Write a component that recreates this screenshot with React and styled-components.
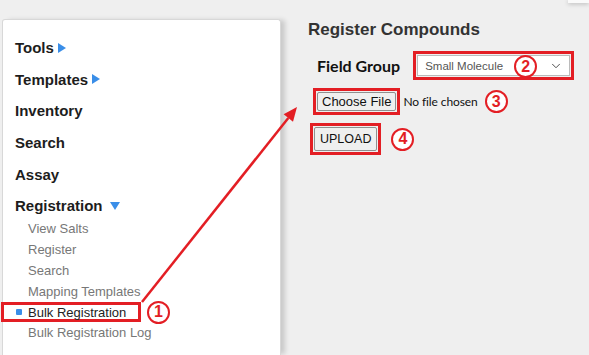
import React from 'react'
import styled, { createGlobalStyle } from 'styled-components'
import { ChevronDown } from 'lucide-react'

const red = '#e31e24'
const blue = '#3a8ee8'
const pageBg = '#efefef'

const GlobalStyle = createGlobalStyle`
  html, body {
    margin: 0;
    padding: 0;
    background: ${pageBg};
    overflow: hidden;
  }
  #root {
    height: 355px;
  }
`

const Page = styled.div`
  position: relative;
  display: flex;
  height: 355px;
  font-family: 'Liberation Sans', Arial, sans-serif;
`

const Sidebar = styled.nav`
  width: 279px;
  flex-shrink: 0;
  margin: 19px 0 0 2px;
  padding-top: 12px;
  box-sizing: border-box;
  background: #fff;
  border: 1px solid #d8d8d8;
  border-bottom: none;
  border-radius: 3px 3px 0 0;
  box-shadow: 5px 0 5px -1px rgba(0, 0, 0, 0.16);
`

const MenuHeading = styled.div`
  display: flex;
  align-items: center;
  gap: 4px;
  padding-left: 12px;
  height: 31.6px;
  font-size: 15px;
  font-weight: bold;
  color: #1d1d1d;
`

const Caret = styled.span`
  width: 0;
  height: 0;
  border-style: solid;
  ${({ $down }) =>
    $down
      ? `border-width: 8px 5px 0 5px; border-color: ${blue} transparent transparent transparent; margin-left: 3px;`
      : `border-width: 5px 0 5px 8px; border-color: transparent transparent transparent ${blue};`}
`

const SubList = styled.div`
  margin-top: -3px;
`

const SubItem = styled.div`
  display: flex;
  align-items: center;
  height: 20.8px;
  padding-left: 25px;
  font-size: 13px;
  color: #777;
`

const ActiveRow = styled.div`
  display: flex;
  align-items: center;
  gap: 6px;
  height: 20.8px;
  margin-left: -2px;
`

const ActiveBox = styled.div`
  display: flex;
  align-items: center;
  gap: 6px;
  width: 140px;
  height: 20px;
  box-sizing: border-box;
  border: 3px solid ${red};
  padding-left: 12px;
  font-size: 13px;
  color: #222;
`

const Bullet = styled.span`
  width: 6px;
  height: 6px;
  border-radius: 1px;
  background: ${blue};
`

const Badge = styled.span`
  display: inline-flex;
  align-items: center;
  justify-content: center;
  width: 23px;
  height: 23px;
  box-sizing: border-box;
  border: 2.5px solid ${red};
  border-radius: 50%;
  background: #fff;
  color: ${red};
  font-size: 16px;
  font-weight: bold;
  flex-shrink: 0;
  margin-left: ${({ $gap }) => $gap || 0}px;
`

const FloatingBadge = styled(Badge)`
  position: absolute;
  left: 98px;
  top: 1px;
`

const Main = styled.main`
  flex: 1;
  display: flex;
  flex-direction: column;
  padding-left: 27px;
`

const CornerTab = styled.div`
  align-self: flex-end;
  width: 21px;
  height: 3px;
  background: #fafafa;
  box-shadow: 0 1px 4px rgba(0, 0, 0, 0.25);
`

const Title = styled.h2`
  margin: 17px 0 0;
  font-size: 17px;
  line-height: 20px;
  font-weight: bold;
  color: #333;
`

const FieldRow = styled.div`
  display: flex;
  align-items: center;
  gap: 13px;
  margin: 11px 0 0 9px;
`

const Label = styled.span`
  font-family: Lato, 'Noto Sans', sans-serif;
  font-weight: bold;
  font-size: 16px;
  color: #111;
`

const Highlight = styled.div`
  position: relative;
  display: flex;
  box-sizing: border-box;
  border: 3px solid ${red};
  padding: 1px;
`

const SelectBox = styled.div`
  display: flex;
  align-items: center;
  justify-content: space-between;
  width: 153px;
  height: 21px;
  box-sizing: border-box;
  padding: 0 6px 0 7px;
  background: #fff;
  border: 1px solid #bbb;
  font-size: 11.5px;
  color: #555;
`

const FileRow = styled.div`
  display: flex;
  align-items: center;
  margin: ${({ $top }) => $top}px 0 0 ${({ $indent }) => $indent}px;
`

const Button = styled.button`
  font-family: 'Liberation Sans', Arial, sans-serif;
  font-size: ${({ $size }) => $size || 13}px;
  color: #111;
  background: #efefef;
  border: 1px solid #8f8f8f;
  border-radius: 2px;
  padding: 0 ${({ $px }) => $px || 8}px;
  height: ${({ $h }) => $h}px;
  cursor: pointer;
`

const NoFile = styled.span`
  margin: 0 7px 0 3px;
  font-family: Lato, 'Noto Sans', sans-serif;
  font-size: 12px;
  letter-spacing: -0.1px;
  color: #111;
`

const Arrow = styled.svg`
  position: absolute;
  left: 0;
  top: 0;
  pointer-events: none;
`

const subItems = ['View Salts', 'Register', 'Search', 'Mapping Templates']

export default function App() {
  return (
    <Page>
      <GlobalStyle />
      <Sidebar>
        <MenuHeading>Tools <Caret /></MenuHeading>
        <MenuHeading>Templates <Caret /></MenuHeading>
        <MenuHeading>Inventory</MenuHeading>
        <MenuHeading>Search</MenuHeading>
        <MenuHeading>Assay</MenuHeading>
        <MenuHeading>Registration <Caret $down /></MenuHeading>
        <SubList>
          {subItems.map((s) => (
            <SubItem key={s}>{s}</SubItem>
          ))}
          <ActiveRow>
            <ActiveBox>
              <Bullet />
              Bulk Registration
            </ActiveBox>
            <Badge>1</Badge>
          </ActiveRow>
          <SubItem>Bulk Registration Log</SubItem>
        </SubList>
      </Sidebar>

      <Main>
        <CornerTab />
        <Title>Register Compounds</Title>
        <FieldRow>
          <Label>Field Group</Label>
          <Highlight>
            <SelectBox>
              Small Molecule
              <ChevronDown size={14} strokeWidth={1.6} color="#444" />
            </SelectBox>
            <FloatingBadge>2</FloatingBadge>
          </Highlight>
        </FieldRow>
        <FileRow $indent={5} $top={8}>
          <Highlight>
            <Button $h={19} $px={4}>Choose File</Button>
          </Highlight>
          <NoFile>No file chosen</NoFile>
          <Badge>3</Badge>
        </FileRow>
        <FileRow $indent={2} $top={8}>
          <Highlight>
            <Button $h={24} $px={5} $size={12.5}>UPLOAD</Button>
          </Highlight>
          <Badge $gap={10}>4</Badge>
        </FileRow>
      </Main>

      <Arrow width="589" height="355" viewBox="0 0 589 355">
        <line x1="142" y1="302" x2="288.3" y2="118" stroke={red} strokeWidth="2.5" />
        <polygon points="297,107 293,121.7 283.6,114.3" fill={red} />
      </Arrow>
    </Page>
  )
}
